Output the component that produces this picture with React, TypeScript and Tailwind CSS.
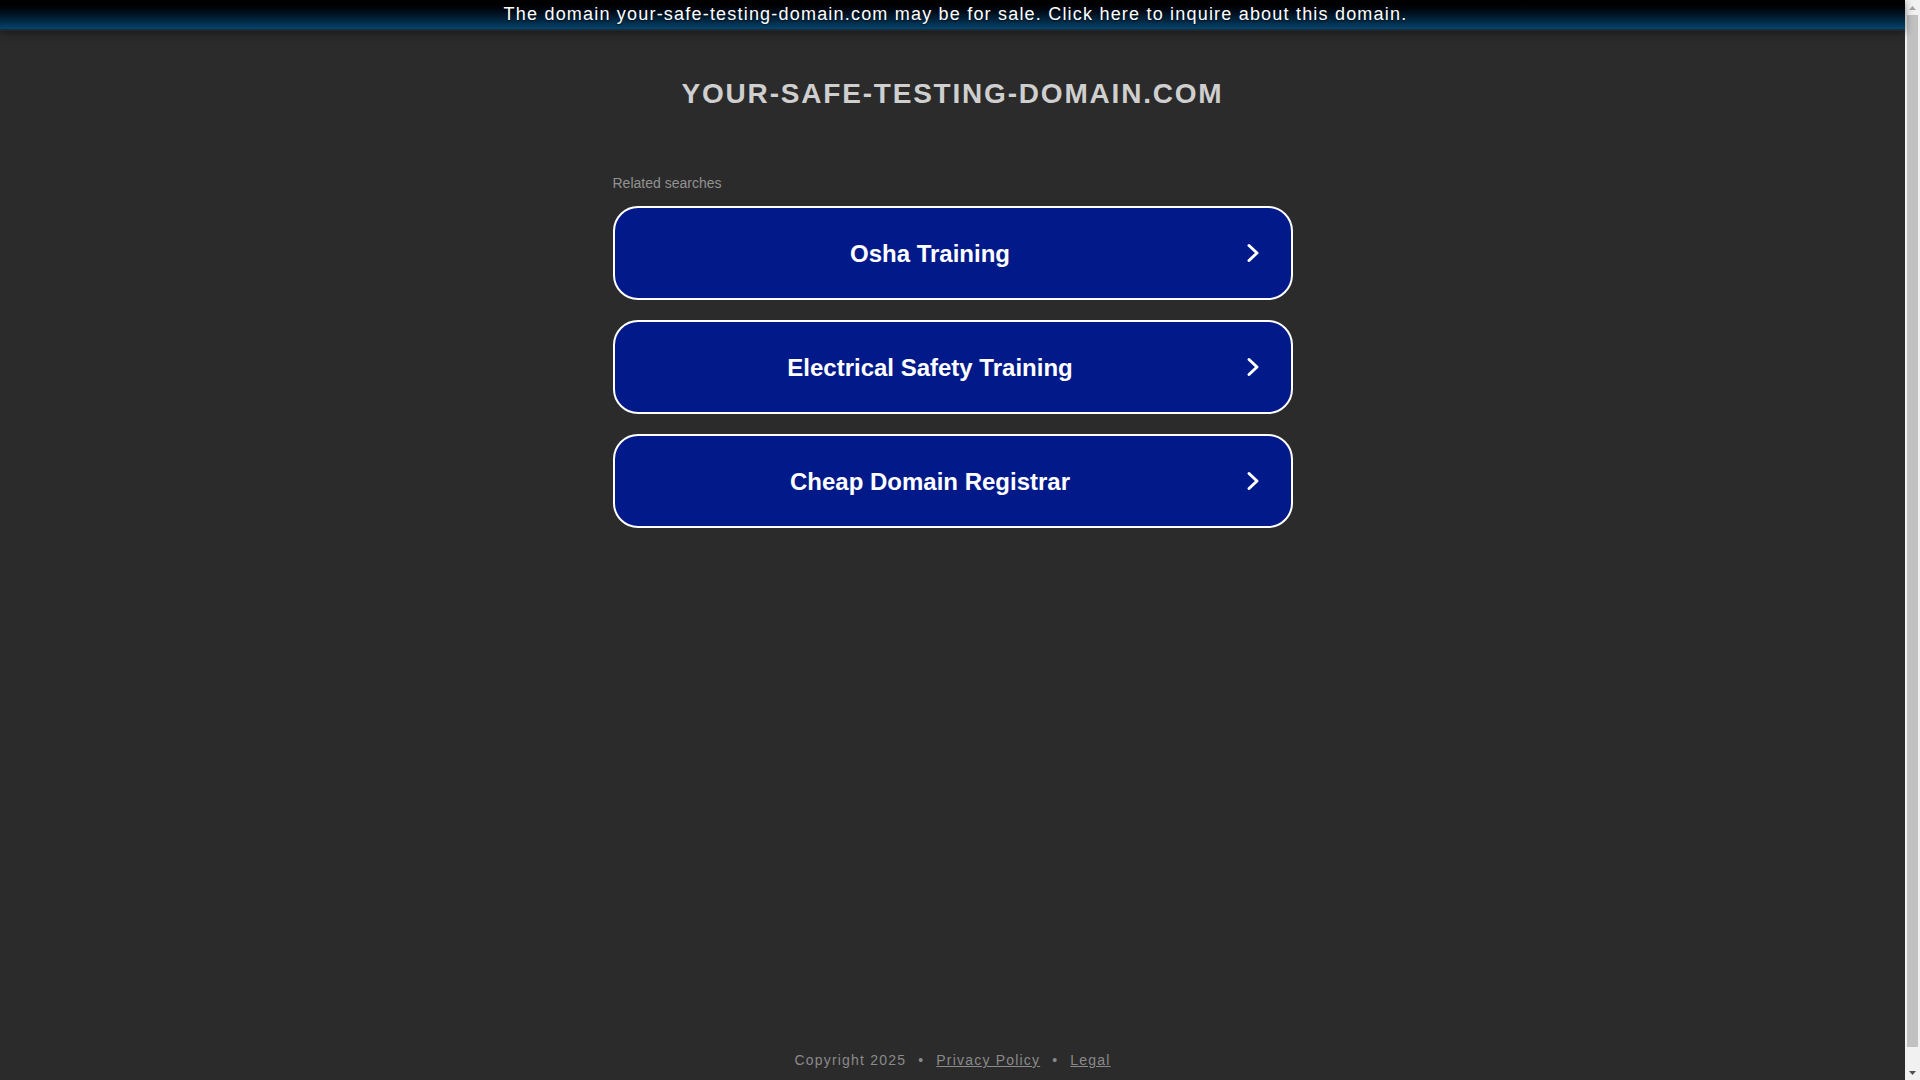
const searches = ["Osha Training", "Electrical Safety Training", "Cheap Domain Registrar"];

function Chevron() {
  return (
    <svg width="14" height="20" viewBox="0 0 14 20" fill="none" className="shrink-0">
      <path d="M3 2.5 L11 10 L3 17.5" stroke="#ffffff" strokeWidth="3" strokeLinecap="round" strokeLinejoin="round" />
    </svg>
  );
}

function ScrollTrack() {
  return (
    <div className="flex w-[15px] shrink-0 flex-col bg-[#f1f1f1]">
      <div className="flex h-[15px] items-center justify-center">
        <svg width="7" height="4" viewBox="0 0 7 4">
          <path d="M0 4 L3.5 0 L7 4 Z" fill="#a3a3a3" />
        </svg>
      </div>
      <div className="mx-[2px] mb-[18px] flex-1 bg-[#c1c1c1]" />
      <div className="flex h-[15px] items-center justify-center">
        <svg width="7" height="4" viewBox="0 0 7 4">
          <path d="M0 0 L3.5 4 L7 0 Z" fill="#505050" />
        </svg>
      </div>
    </div>
  );
}

export default function App() {
  return (
    <div className="flex h-screen overflow-hidden bg-[#2b2b2b] font-['Liberation_Sans',Arial,sans-serif]">
      <div className="flex min-h-[1098px] flex-1 flex-col">
        <div className="relative z-10 border-b-2 border-[#1c2a33] bg-gradient-to-b from-[#000000] to-[#05446d] shadow-[0_2px_8px_rgba(0,0,0,0.45)]">
          <p className="h-[29px] pl-[6px] pt-[1px] text-center text-[18px] leading-[27px] tracking-[1.2px] text-white [text-shadow:0_1px_2px_rgba(0,0,0,0.6)]">
            The domain your-safe-testing-domain.com may be for sale. Click here to inquire about this domain.
          </p>
        </div>

        <main className="mx-auto flex w-[680px] flex-col pt-[47px]">
          <h1 className="text-center text-[28px] font-bold leading-[32px] tracking-[1.8px] text-[#cfcfcf]">
            YOUR-SAFE-TESTING-DOMAIN.COM
          </h1>

          <p className="mt-[63px] text-[14px] leading-[20px] text-[#929292]">Related searches</p>

          <div className="mt-[13px] flex flex-col gap-[20px]">
            {searches.map((s) => (
              <a
                key={s}
                href="#"
                className="flex h-[94px] items-center rounded-[25px] border-2 border-white bg-[#021a89] pr-[31px]"
              >
                <span className="flex-1 pt-[2px] text-center text-[24px] font-bold text-white">{s}</span>
                <Chevron />
              </a>
            ))}
          </div>
        </main>

        <footer className="mt-auto flex justify-center pb-[29px] text-[14px] leading-[18px] tracking-[1.2px] text-[#8a8a8a]">
          <span>Copyright 2025</span>
          <span className="mx-[12px]">•</span>
          <a href="#" className="underline">Privacy Policy</a>
          <span className="mx-[12px]">•</span>
          <a href="#" className="underline">Legal</a>
        </footer>
      </div>
      <ScrollTrack />
    </div>
  );
}
